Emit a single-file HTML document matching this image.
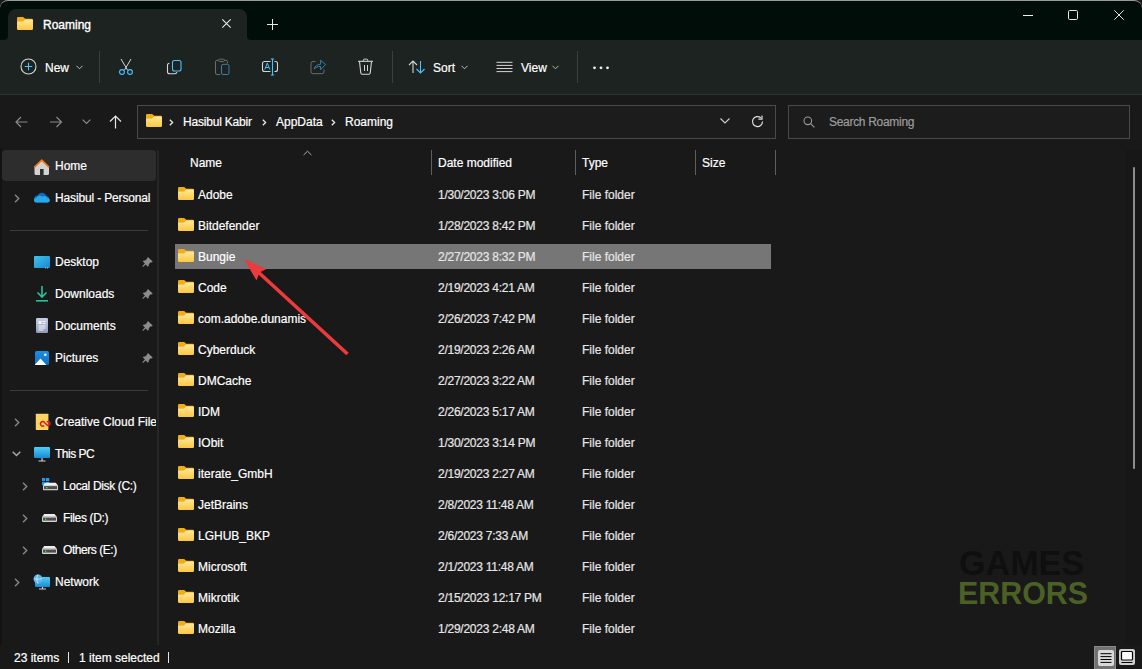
<!DOCTYPE html>
<html><head><meta charset="utf-8">
<style>
*{margin:0;padding:0;box-sizing:border-box}
html,body{width:1142px;height:669px;overflow:hidden;background:#191919}
body{font-family:"Liberation Sans",sans-serif;font-size:12px;color:#fff;position:relative}
.a{position:absolute}
.t{position:absolute;white-space:nowrap;line-height:14px;-webkit-text-stroke:0.2px currentColor}
svg{position:absolute;overflow:visible}
#title{left:0;top:0;width:1142px;height:40px;background:#010d09;border-radius:8px 8px 0 0;border-top:1px solid #9a9a9a}
#tab{left:8px;top:9px;width:239px;height:31px;background:#1d2320;border-radius:8px 8px 0 0}
#toolbar{left:0;top:40px;width:1142px;height:55px;background:#1d2320;border-bottom:1px solid #303431}
.box{position:absolute;border:1px solid #4a4a4a;background:#1c1c1c}
.sep{position:absolute;width:1px;background:#3b403d}
.hs{position:absolute;width:1px;top:150px;height:25px;background:#5e5e5e}
.nm{left:198px}
.dt{left:438px;color:#e6e6e6;letter-spacing:-0.25px}
.ty{left:582px;color:#e6e6e6}
</style></head><body>
<svg width="0" height="0" style="position:absolute">
<defs>
<linearGradient id="fg" x1="0" y1="0" x2="0" y2="1"><stop offset="0" stop-color="#ffe79a"/><stop offset="1" stop-color="#fcc73f"/></linearGradient>
<symbol id="folder" viewBox="0 0 16 13">
<path d="M1.2 0h5l2 1.8h6.6a1.2 1.2 0 0 1 1.2 1.2v1.5H0V1.2A1.2 1.2 0 0 1 1.2 0z" fill="#f1ad12"/>
<path d="M0 4.2h6.2l1.9-1.6h6.7a1.2 1.2 0 0 1 1.2 1.2v8a1.2 1.2 0 0 1-1.2 1.2H1.2A1.2 1.2 0 0 1 0 11.8z" fill="url(#fg)"/>
</symbol>
<symbol id="pin" viewBox="0 0 11 10">
<path d="M6.2 0.3l4.5 4.3-1 .9-1-.3-2 2 .1 1.6-.9.9-2.2-2.3L1 10 .3 9.3l2.6-2.8L.8 4.3l.9-.9 1.6.2 2-2-.2-1z" fill="#8c8c8c"/>
</symbol>
<symbol id="drive" viewBox="0 0 15 8">
<path d="M2.2 0h10.3l2.3 2.8H.2z" fill="#efefef"/>
<rect x="0" y="2.6" width="15" height="5.4" rx="1" fill="#d4d4d4"/>
<rect x="1" y="3.6" width="13" height="3" fill="#4d4d4d"/>
<rect x="3" y="4.5" width="1.4" height="1.4" fill="#32e24a"/>
</symbol>
<symbol id="chev" viewBox="0 0 6 9"><path d="M1 .8l3.7 3.7L1 8.2" fill="none" stroke="#858585" stroke-width="1.5"/></symbol>
</defs>
</svg>

<!-- title bar -->
<div id="title" class="a"></div>
<div id="tab" class="a"></div>
<svg style="left:4px;top:36px" width="4" height="4"><path d="M4 0v4H0a4 4 0 0 0 4-4z" fill="#1d2320"/></svg>
<svg style="left:247px;top:36px" width="4" height="4"><path d="M0 0v4h4a4 4 0 0 1-4-4z" fill="#1d2320"/></svg>
<svg style="left:17px;top:17px" width="16" height="13"><use href="#folder"/></svg>
<div class="t" style="left:43px;top:18px;font-size:12px;-webkit-text-stroke:0.35px #fff">Roaming</div>
<svg style="left:222px;top:19px" width="9" height="9"><path d="M.3.3l8.4 8.4M8.7.3L.3 8.7" stroke="#e8e8e8" stroke-width="1.1"/></svg>
<svg style="left:267px;top:19px" width="11" height="11"><path d="M5.5 0v11M0 5.5h11" stroke="#e8e8e8" stroke-width="1"/></svg>
<svg style="left:1023px;top:15px" width="10" height="1"><path d="M0 .5h10" stroke="#f0f0f0" stroke-width="1"/></svg>
<svg style="left:1068px;top:10px" width="10" height="10"><rect x=".5" y=".5" width="9" height="9" rx="1.2" fill="none" stroke="#e8e8e8" stroke-width="1"/></svg>
<svg style="left:1114px;top:10px" width="10" height="10"><path d="M.3.3l9.4 9.4M9.7.3L.3 9.7" stroke="#e8e8e8" stroke-width="1"/></svg>

<!-- toolbar -->
<div id="toolbar" class="a"></div>
<svg style="left:20px;top:58px" width="17" height="17"><circle cx="8.5" cy="8.5" r="7.5" fill="none" stroke="#d6d6d6" stroke-width="1.1"/><path d="M8.5 4.8v7.4M4.8 8.5h7.4" stroke="#4cc2ff" stroke-width="1.1"/></svg>
<div class="t" style="left:45px;top:61px">New</div>
<svg style="left:76px;top:65px" width="7" height="5"><path d="M.5.8l3 3 3-3" fill="none" stroke="#bdbdbd" stroke-width="1"/></svg>
<div class="sep" style="left:99px;top:51px;height:32px"></div>
<!-- cut -->
<svg style="left:117px;top:58px" width="18" height="18"><path d="M4 1l6.5 11M14 1L7.5 12" stroke="#d6d6d6" stroke-width="1"/><circle cx="5" cy="14" r="2.4" fill="none" stroke="#4cc2ff" stroke-width="1.1"/><circle cx="13" cy="14" r="2.4" fill="none" stroke="#4cc2ff" stroke-width="1.1"/></svg>
<!-- copy -->
<svg style="left:166px;top:59px" width="17" height="17"><path d="M3.5 4.3A2 2 0 0 0 1.5 6.3v6.4a2 2 0 0 0 2 2h5.5a2 2 0 0 0 1.9-1.5" fill="none" stroke="#d6d6d6" stroke-width="1.1"/><rect x="6.5" y="1.5" width="8.5" height="10.5" rx="2" fill="none" stroke="#4cc2ff" stroke-width="1.1"/></svg>
<!-- paste (disabled) -->
<svg style="left:214px;top:58px" width="17" height="18"><path d="M6.3 16.5H3A1.5 1.5 0 0 1 1.5 15V3.8A1.5 1.5 0 0 1 3 2.3h1.6M10.4 2.3H12a1.5 1.5 0 0 1 1.5 1.5v1.5" fill="none" stroke="#6c6c6c" stroke-width="1"/><rect x="4.5" y="1.2" width="6" height="2.3" rx="1.1" fill="none" stroke="#6c6c6c" stroke-width="1"/><rect x="7.5" y="6.3" width="7.5" height="10.2" rx="1.5" fill="none" stroke="#3c7fa6" stroke-width="1"/></svg>
<!-- rename -->
<svg style="left:261px;top:58px" width="18" height="18"><path d="M9.5 3.5H3.5a2 2 0 0 0-2 2v6a2 2 0 0 0 2 2h6M13.5 3.5h1a2 2 0 0 1 2 2v6a2 2 0 0 1-2 2h-1" fill="none" stroke="#d6d6d6" stroke-width="1.1"/><path d="M11.5 1v16M9.8 1h3.4M9.8 17h3.4" stroke="#4cc2ff" stroke-width="1.1"/><path d="M3.8 11.5L6.3 5l2.5 6.5M4.7 9.5h3.2" fill="none" stroke="#4cc2ff" stroke-width="1"/></svg>
<!-- share (disabled) -->
<svg style="left:310px;top:58px" width="18" height="18"><path d="M5.5 3.5H3a2 2 0 0 0-2 2v8.2a2 2 0 0 0 2 2h9a2 2 0 0 0 2-2v-2.2" fill="none" stroke="#6c6c6c" stroke-width="1"/><path d="M4.2 11C5 8 7.5 6.3 10.6 6.3V2.3l5 4.3-5 5.1V8.5C8 8.3 5.8 9.2 4.2 11z" fill="none" stroke="#3c7fa6" stroke-width="1"/></svg>
<!-- delete -->
<svg style="left:357px;top:58px" width="17" height="18"><path d="M1 3.3h15" stroke="#d6d6d6" stroke-width="1.1"/><path d="M6.3 3.3V2.3a1.2 1.2 0 0 1 1.2-1.2h2a1.2 1.2 0 0 1 1.2 1.2v1" fill="none" stroke="#d6d6d6" stroke-width="1"/><path d="M2.5 3.5l1.3 11.5a1.5 1.5 0 0 0 1.5 1.3h6.4a1.5 1.5 0 0 0 1.5-1.3L14.5 3.5" fill="none" stroke="#d6d6d6" stroke-width="1.1"/><path d="M7.5 7v6M10.5 7v6" stroke="#d6d6d6" stroke-width="1"/></svg>
<div class="sep" style="left:392px;top:51px;height:32px"></div>
<!-- sort -->
<svg style="left:408px;top:60px" width="18" height="14"><path d="M5 13V1M1 5l4-4 4 4" fill="none" stroke="#d6d6d6" stroke-width="1.1"/><path d="M12.5 1v12M8.5 9l4 4 4-4" fill="none" stroke="#4cc2ff" stroke-width="1.1"/></svg>
<div class="t" style="left:433px;top:61px">Sort</div>
<svg style="left:461px;top:65px" width="7" height="5"><path d="M.5.8l3 3 3-3" fill="none" stroke="#bdbdbd" stroke-width="1"/></svg>
<!-- view -->
<svg style="left:496px;top:61px" width="17" height="12"><path d="M.5 1.3h16M.5 4.4h16M.5 7.5h16M.5 10.6h16" stroke="#d6d6d6" stroke-width="1"/></svg>
<div class="t" style="left:521px;top:61px">View</div>
<svg style="left:552px;top:65px" width="7" height="5"><path d="M.5.8l3 3 3-3" fill="none" stroke="#bdbdbd" stroke-width="1"/></svg>
<div class="sep" style="left:577px;top:51px;height:32px"></div>
<svg style="left:592px;top:66px" width="18" height="4"><circle cx="2.5" cy="1.8" r="1.4" fill="#f0f0f0"/><circle cx="9" cy="1.8" r="1.4" fill="#f0f0f0"/><circle cx="15.5" cy="1.8" r="1.4" fill="#f0f0f0"/></svg>

<!-- address row -->
<svg style="left:15px;top:116px" width="13" height="12"><path d="M12.5 6H1M6 1L1 6l5 5" fill="none" stroke="#8a8a8a" stroke-width="1.2"/></svg>
<svg style="left:50px;top:116px" width="13" height="12"><path d="M0 6h11.5M6.5 1l5 5-5 5" fill="none" stroke="#8a8a8a" stroke-width="1.2"/></svg>
<svg style="left:82px;top:119px" width="9" height="6"><path d="M.6.6l3.9 3.9L8.4.6" fill="none" stroke="#8a8a8a" stroke-width="1.2"/></svg>
<svg style="left:109px;top:115px" width="13" height="14"><path d="M6.5 13.5V1.2M1 6.5l5.5-5.5 5.5 5.5" fill="none" stroke="#e6e6e6" stroke-width="1.2"/></svg>
<div class="box" style="left:137px;top:105px;width:639px;height:34px"></div>
<svg style="left:146px;top:114px" width="16" height="13"><use href="#folder"/></svg>
<svg style="left:169px;top:119px" width="5" height="7"><path d="M.8.8l2.8 2.7L.8 6.2" fill="none" stroke="#e8e8e8" stroke-width="1.3"/></svg>
<div class="t" style="left:183px;top:115px;letter-spacing:-0.2px">Hasibul Kabir</div>
<svg style="left:262px;top:119px" width="5" height="7"><path d="M.8.8l2.8 2.7L.8 6.2" fill="none" stroke="#e8e8e8" stroke-width="1.3"/></svg>
<div class="t" style="left:276px;top:115px">AppData</div>
<svg style="left:331px;top:119px" width="5" height="7"><path d="M.8.8l2.8 2.7L.8 6.2" fill="none" stroke="#e8e8e8" stroke-width="1.3"/></svg>
<div class="t" style="left:345px;top:115px">Roaming</div>
<svg style="left:720px;top:118px" width="10" height="6"><path d="M.5.5l4.5 4.5L9.5.5" fill="none" stroke="#d0d0d0" stroke-width="1.1"/></svg>
<svg style="left:751px;top:115px" width="13" height="13"><path d="M11.5 6.5A5 5 0 1 1 9.8 2.8" fill="none" stroke="#e0e0e0" stroke-width="1.2"/><path d="M11 .5v3.6H7.4" fill="none" stroke="#e0e0e0" stroke-width="1.2"/></svg>
<div class="box" style="left:788px;top:105px;width:342px;height:34px"></div>
<svg style="left:803px;top:116px" width="12" height="12"><circle cx="4.8" cy="4.8" r="3.8" fill="none" stroke="#9a9a9a" stroke-width="1.1"/><path d="M7.6 7.6l3.8 3.8" stroke="#9a9a9a" stroke-width="1.1"/></svg>
<div class="t" style="left:829px;top:115px;color:#9d9d9d;letter-spacing:-0.3px">Search Roaming</div>

<!-- nav pane -->
<div class="a" style="left:0;top:148px;width:2px;height:497px;background:#131313"></div>
<div class="a" style="left:157px;top:150px;width:2px;height:495px;background:#262626"></div>
<div class="a" style="left:2px;top:150px;width:154px;height:31px;background:#2d2d2d;border-radius:4px"></div>
<svg style="left:33px;top:158px" width="18" height="18"><path d="M1.5 9L8.8 2 16 9v6.5a1.5 1.5 0 0 1-1.5 1.5H3a1.5 1.5 0 0 1-1.5-1.5z" fill="#d2d2d2"/><rect x="7" y="11" width="3.6" height="6" fill="#2e2e2e"/><path d="M1.3 9.3L8.8 2.2l7.4 7.1" fill="none" stroke="#f07a12" stroke-width="1.6" stroke-linejoin="round"/></svg>
<div class="t" style="left:55px;top:159px">Home</div>
<svg style="left:14px;top:194px" width="6" height="9"><use href="#chev"/></svg>
<svg style="left:34px;top:192px" width="16" height="11"><path d="M4 10.5a3.5 3.5 0 0 1-.5-7A4.8 4.8 0 0 1 12.3 4a3.3 3.3 0 0 1 .2 6.5z" fill="#0f6cbd"/><path d="M1.5 10.5a2.5 2.5 0 0 1 .8-4.8 4 4 0 0 1 6.2-1 3.3 3.3 0 0 1 5 1.3A2.6 2.6 0 0 1 15.8 9a2 2 0 0 1-1.9 1.5z" fill="#28a8ea"/></svg>
<div class="t" style="letter-spacing:-0.15px;left:55px;top:191px">Hasibul - Personal</div>
<div class="a" style="left:10px;top:230px;width:138px;height:1px;background:#3a3a3a"></div>

<svg style="left:34px;top:256px" width="16" height="13"><defs><linearGradient id="dg" x1="0" y1="0" x2="1" y2="1"><stop offset="0" stop-color="#3fc3ec"/><stop offset="1" stop-color="#1a86d0"/></linearGradient></defs><rect x="0" y="0" width="16" height="12" rx="1" fill="url(#dg)"/><rect x="11" y="11.5" width="1" height="1" fill="#bdbdbd"/><rect x="13" y="11.5" width="1" height="1" fill="#bdbdbd"/></svg>
<div class="t" style="left:55px;top:255px">Desktop</div>
<svg style="left:142px;top:257px" width="11" height="10"><use href="#pin"/></svg>

<svg style="left:36px;top:286px" width="12" height="16"><path d="M6 0v11M1.5 6.5L6 11l4.5-4.5" fill="none" stroke="#27c39a" stroke-width="1.6"/><path d="M0 14.8h12" stroke="#27c39a" stroke-width="1.6"/></svg>
<div class="t" style="left:55px;top:287px">Downloads</div>
<svg style="left:142px;top:289px" width="11" height="10"><use href="#pin"/></svg>

<svg style="left:36px;top:318px" width="12" height="15"><defs><linearGradient id="docg" x1="0" y1="0" x2="0" y2="1"><stop offset="0" stop-color="#c6d1e6"/><stop offset="1" stop-color="#8d9ab5"/></linearGradient></defs><rect x="0" y="0" width="12" height="15" rx="1.2" fill="url(#docg)"/><rect x="2.5" y="3" width="3" height="3" fill="#f4f6fa"/><path d="M6.5 3.5h3M6.5 5.5h3M2.5 8h7M2.5 10h7M2.5 12h5" stroke="#f4f6fa" stroke-width="1"/></svg>
<div class="t" style="left:55px;top:319px">Documents</div>
<svg style="left:142px;top:321px" width="11" height="10"><use href="#pin"/></svg>

<svg style="left:35px;top:351px" width="14" height="14"><defs><linearGradient id="pg" x1="0" y1="0" x2="0" y2="1"><stop offset="0" stop-color="#1e8fe0"/><stop offset="1" stop-color="#0c6fc4"/></linearGradient></defs><rect x="0" y="0" width="14" height="14" rx="1.5" fill="url(#pg)"/><path d="M0 13.5L5.5 7.5 11 13.5V14H0z" fill="#fff"/><circle cx="10.3" cy="3.7" r="1.3" fill="#fff"/></svg>
<div class="t" style="left:55px;top:351px">Pictures</div>
<svg style="left:142px;top:353px" width="11" height="10"><use href="#pin"/></svg>

<div class="a" style="left:10px;top:390px;width:138px;height:1px;background:#3a3a3a"></div>

<svg style="left:14px;top:418px" width="6" height="9"><use href="#chev"/></svg>
<svg style="left:35px;top:413px" width="16" height="17"><rect x=".8" y=".7" width="12.6" height="16.2" rx=".6" fill="#fcd462"/><path d="M9.2 12.6a2.3 2.3 0 1 1 .3-3.2l2.2 2.3a1.9 1.9 0 1 0 .2-2.6" fill="none" stroke="#e3151a" stroke-width="1.5"/></svg>
<div class="t" style="left:55px;top:415px;width:101px;overflow:hidden">Creative Cloud Files</div>

<svg style="left:12px;top:451px" width="9" height="6"><path d="M.7.7l3.8 3.8L8.3.7" fill="none" stroke="#a8a8a8" stroke-width="1.5"/></svg>
<svg style="left:34px;top:447px" width="16" height="15"><defs><linearGradient id="mg" x1="0" y1="0" x2="0" y2="1"><stop offset="0" stop-color="#4ccff5"/><stop offset="1" stop-color="#1b8ad6"/></linearGradient></defs><rect x="0" y="0" width="16" height="11" rx="1" fill="url(#mg)"/><path d="M8 11v2.5M4.5 14h7" stroke="#cfcfcf" stroke-width="1.2"/></svg>
<div class="t" style="letter-spacing:-0.5px;left:55px;top:447px">This PC</div>

<svg style="left:22px;top:482px" width="6" height="9"><use href="#chev"/></svg>
<svg style="left:42px;top:478px" width="16" height="13"><rect x="0" y="0" width="3.2" height="3.2" fill="#1a9df0"/><rect x="4" y="0" width="3.2" height="3.2" fill="#1a9df0"/><rect x="0" y="4" width="3.2" height="3.2" fill="#1a9df0"/><rect x="4" y="4" width="3.2" height="3.2" fill="#1a9df0"/><svg x="1" y="4.5" width="15" height="8" viewBox="0 0 15 8"><use href="#drive"/></svg></svg>
<div class="t" style="letter-spacing:-0.35px;left:63px;top:479px">Local Disk (C:)</div>

<svg style="left:22px;top:514px" width="6" height="9"><use href="#chev"/></svg>
<svg style="left:42px;top:514px" width="15" height="8"><use href="#drive"/></svg>
<div class="t" style="letter-spacing:-0.35px;left:63px;top:511px">Files (D:)</div>

<svg style="left:22px;top:546px" width="6" height="9"><use href="#chev"/></svg>
<svg style="left:42px;top:546px" width="15" height="8"><use href="#drive"/></svg>
<div class="t" style="letter-spacing:-0.45px;left:63px;top:543px">Others (E:)</div>

<svg style="left:14px;top:578px" width="6" height="9"><use href="#chev"/></svg>
<svg style="left:33px;top:574px" width="18" height="16"><rect x="2" y="3" width="15" height="10" rx="1" fill="url(#mg)"/><path d="M9.5 13v1.5M6 15h7" stroke="#cfcfcf" stroke-width="1.2"/><circle cx="5" cy="5" r="4.5" fill="#5cb6e8"/><path d="M1 4.5c2 1 5 1 8 0M5 .5c-1.5 2-1.5 6 0 9" fill="none" stroke="#d5f0ff" stroke-width=".8"/></svg>
<div class="t" style="left:55px;top:575px">Network</div>

<!-- file list header -->
<div class="t" style="left:190px;top:156px">Name</div>
<svg style="left:303px;top:150px" width="9" height="6"><path d="M.6 5L4.5 1.2 8.4 5" fill="none" stroke="#b0b0b0" stroke-width="1"/></svg>
<div class="hs" style="left:431px"></div>
<div class="t" style="left:438px;top:156px">Date modified</div>
<div class="hs" style="left:575px"></div>
<div class="t" style="left:582px;top:156px">Type</div>
<div class="hs" style="left:695px"></div>
<div class="t" style="left:702px;top:156px">Size</div>
<div class="hs" style="left:775px"></div>

<!-- selection -->
<div class="a" style="left:175px;top:244px;width:596px;height:25px;background:#767676"></div>

<svg style="left:178px;top:187px" width="16" height="13"><use href="#folder"/></svg><div class="t nm" style="top:188px">Adobe</div><div class="t dt" style="top:188px">1/30/2023 3:06 PM</div><div class="t ty" style="top:188px">File folder</div>
<svg style="left:178px;top:218px" width="16" height="13"><use href="#folder"/></svg><div class="t nm" style="top:219px">Bitdefender</div><div class="t dt" style="top:219px">1/28/2023 8:42 PM</div><div class="t ty" style="top:219px">File folder</div>
<svg style="left:178px;top:249px" width="16" height="13"><use href="#folder"/></svg><div class="t nm" style="top:250px">Bungie</div><div class="t dt" style="top:250px">2/27/2023 8:32 PM</div><div class="t ty" style="top:250px">File folder</div>
<svg style="left:178px;top:280px" width="16" height="13"><use href="#folder"/></svg><div class="t nm" style="top:281px">Code</div><div class="t dt" style="top:281px">2/19/2023 4:21 AM</div><div class="t ty" style="top:281px">File folder</div>
<svg style="left:178px;top:311px" width="16" height="13"><use href="#folder"/></svg><div class="t nm" style="top:312px">com.adobe.dunamis</div><div class="t dt" style="top:312px">2/26/2023 7:42 PM</div><div class="t ty" style="top:312px">File folder</div>
<svg style="left:178px;top:342px" width="16" height="13"><use href="#folder"/></svg><div class="t nm" style="top:343px">Cyberduck</div><div class="t dt" style="top:343px">2/19/2023 2:26 AM</div><div class="t ty" style="top:343px">File folder</div>
<svg style="left:178px;top:373px" width="16" height="13"><use href="#folder"/></svg><div class="t nm" style="top:374px">DMCache</div><div class="t dt" style="top:374px">2/27/2023 3:22 AM</div><div class="t ty" style="top:374px">File folder</div>
<svg style="left:178px;top:404px" width="16" height="13"><use href="#folder"/></svg><div class="t nm" style="top:405px">IDM</div><div class="t dt" style="top:405px">2/26/2023 5:17 AM</div><div class="t ty" style="top:405px">File folder</div>
<svg style="left:178px;top:435px" width="16" height="13"><use href="#folder"/></svg><div class="t nm" style="top:436px">IObit</div><div class="t dt" style="top:436px">1/30/2023 3:14 PM</div><div class="t ty" style="top:436px">File folder</div>
<svg style="left:178px;top:466px" width="16" height="13"><use href="#folder"/></svg><div class="t nm" style="top:467px">iterate_GmbH</div><div class="t dt" style="top:467px">2/19/2023 2:27 AM</div><div class="t ty" style="top:467px">File folder</div>
<svg style="left:178px;top:497px" width="16" height="13"><use href="#folder"/></svg><div class="t nm" style="top:498px">JetBrains</div><div class="t dt" style="top:498px">2/8/2023 11:48 AM</div><div class="t ty" style="top:498px">File folder</div>
<svg style="left:178px;top:528px" width="16" height="13"><use href="#folder"/></svg><div class="t nm" style="top:529px">LGHUB_BKP</div><div class="t dt" style="top:529px">2/6/2023 7:33 AM</div><div class="t ty" style="top:529px">File folder</div>
<svg style="left:178px;top:559px" width="16" height="13"><use href="#folder"/></svg><div class="t nm" style="top:560px">Microsoft</div><div class="t dt" style="top:560px">2/1/2023 11:48 AM</div><div class="t ty" style="top:560px">File folder</div>
<svg style="left:178px;top:590px" width="16" height="13"><use href="#folder"/></svg><div class="t nm" style="top:591px">Mikrotik</div><div class="t dt" style="top:591px">2/15/2023 12:17 PM</div><div class="t ty" style="top:591px">File folder</div>
<svg style="left:178px;top:621px" width="16" height="13"><use href="#folder"/></svg><div class="t nm" style="top:622px">Mozilla</div><div class="t dt" style="top:622px">1/29/2023 2:48 AM</div><div class="t ty" style="top:622px">File folder</div>

<div class="a" style="left:1125px;top:150px;width:17px;height:495px;background:#171717"></div>
<div class="a" style="left:1133px;top:167px;width:2px;height:302px;background:#8e8e8e;border-radius:1px"></div>
<!-- status bar -->
<div class="t" style="left:14px;top:651px">23 items</div>
<div class="a" style="left:68px;top:652px;width:1px;height:11px;background:#e6e6e6"></div>
<div class="t" style="left:79px;top:651px">1 item selected</div>
<div class="a" style="left:168px;top:652px;width:1px;height:11px;background:#e6e6e6"></div>

<div class="a" style="left:1094px;top:646px;width:22px;height:23px;background:#727272;border:1px solid #8a8a8a;border-bottom:none"></div>
<svg style="left:1098px;top:650px" width="16" height="16"><rect x="0" y="0" width="16" height="16" rx="2" fill="#d8d8d8"/><path d="M2.5 3.7h11M2.5 6.6h11M2.5 9.5h11M2.5 12.4h11" stroke="#000" stroke-width="1"/></svg>
<svg style="left:1119px;top:649px" width="16" height="16"><rect x="0" y="0" width="16" height="16" rx="2" fill="#cfcfcf"/><rect x="2.5" y="2.5" width="11" height="8.5" rx="1" fill="#fff" stroke="#000" stroke-width="1.2"/><path d="M2.5 13.5h11" stroke="#000" stroke-width="1"/></svg>

<!-- watermark -->
<svg style="left:958px;top:548px" width="132" height="60"><text x="1" y="27.3" font-family="Liberation Sans" font-weight="bold" font-size="35.5" fill="#0f0f0f" textLength="125" lengthAdjust="spacingAndGlyphs">GAMES</text><text x="0" y="56" font-family="Liberation Sans" font-weight="bold" font-size="32" fill="#4b6025" textLength="130" lengthAdjust="spacingAndGlyphs">ERRORS</text></svg>

<!-- red arrow -->
<svg style="left:0;top:0" width="1142" height="669"><path d="M347.5 354L256 270" stroke="#ec3a3d" stroke-width="3.6" stroke-linecap="butt"/><path d="M244 259L266.5 269L259.5 272.5L256.5 280.5z" fill="#ec3a3d"/></svg>
</body></html>
